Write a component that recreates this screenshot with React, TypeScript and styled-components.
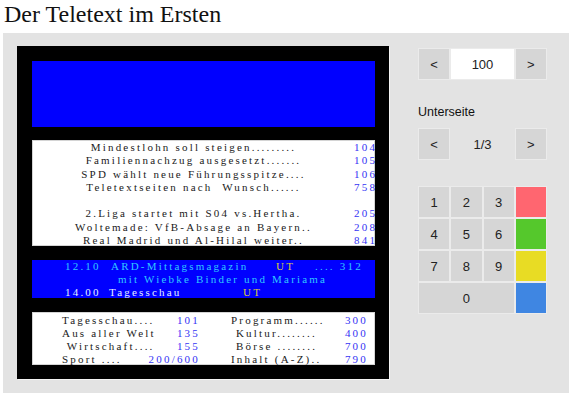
import React, { FC } from "react";
import styled, { createGlobalStyle } from "styled-components";

const GlobalStyle = createGlobalStyle`
  body {
    margin: 0;
    background: #fff;
  }
`;

const Title = styled.h1`
  margin: 0;
  padding: 1px 0 0 4px;
  height: 33px;
  box-sizing: border-box;
  font: normal 24px/26px "Liberation Serif", serif;
  color: #111;
`;

const Panel = styled.main`
  display: flex;
  align-items: flex-start;
  margin-left: 3px;
  padding: 13px 0 0 14px;
  height: 360px;
  box-sizing: border-box;
  background: #e3e3e3;
`;

const Screen = styled.section`
  display: flex;
  flex-direction: column;
  flex-shrink: 0;
  width: 372px;
  height: 333px;
  box-sizing: border-box;
  padding: 15px 14px 14px 15px;
  background: #000;
  box-shadow: 1px 1px 0 #f4f4f4;
  font-family: "Liberation Serif", serif;
  font-size: 11px;
  letter-spacing: 2.2px;
  white-space: pre;
`;

const Banner = styled.div`
  flex-shrink: 0;
  height: 66px;
  background: #0000ff;
`;

const Paper = styled.div<{ $h: number; $gap: number; $pad?: number }>`
  flex-shrink: 0;
  margin-top: ${p => p.$gap}px;
  height: ${p => p.$h}px;
  padding-top: ${p => p.$pad || 0}px;
  box-sizing: border-box;
  background: #fff;
  border: 1px solid #d4d4d4;
  color: #1a1a1a;
`;

const HeadlineRow = styled.div`
  display: grid;
  grid-template-columns: 321px 1fr;
  height: 13.25px;
  line-height: 13.25px;
`;

const HeadlineText = styled.span`
  text-align: center;
`;

const PageNum = styled.span`
  text-align: right;
  padding-right: 3px;
  color: #3434f4;
`;

const Schedule = styled.div`
  flex-shrink: 0;
  margin-top: 14px;
  height: 38px;
  padding-left: 33px;
  background: #0000ff;
  line-height: 13px;
`;

const ScheduleRow = styled.div<{ $indent?: number }>`
  display: flex;
  height: 13px;
  padding-left: ${p => p.$indent || 0}px;
`;

const Slot = styled.span<{ $w?: number; $c: string }>`
  ${p => (p.$w ? `width: ${p.$w}px;` : "")}
  flex-shrink: 0;
  color: ${p => p.$c};
`;

const IndexRow = styled.div`
  display: flex;
  gap: 28px;
  padding-left: 29px;
  height: 13px;
  line-height: 13px;
`;

const IndexHalf = styled.div<{ $w: number }>`
  display: flex;
  justify-content: space-between;
  width: ${p => p.$w}px;
`;

const Controls = styled.aside`
  display: flex;
  flex-direction: column;
  width: 129px;
  margin: 2px 0 0 29px;
  font-family: "Liberation Sans", Arial, sans-serif;
  font-size: 13px;
  color: #222;
`;

const KeyGrid = styled.div<{ $gap?: number }>`
  display: grid;
  grid-template-columns: repeat(4, 1fr);
  grid-auto-rows: 32px;
  margin-top: ${p => p.$gap || 0}px;
`;

const Key = styled.button<{ $color?: string; $span?: number }>`
  grid-column: span ${p => p.$span || 1};
  padding: 0;
  border: 1px solid #ebebeb;
  background: ${p => p.$color || "#d6d6d6"};
  font: inherit;
  color: #222;
`;

const PageInput = styled.input`
  grid-column: span 2;
  width: 100%;
  box-sizing: border-box;
  border: 1px solid #ebebeb;
  background: #fff;
  text-align: center;
  font: inherit;
  color: #222;
  outline: none;
`;

const SubPage = styled.span`
  grid-column: span 2;
  display: flex;
  align-items: center;
  justify-content: center;
`;

const Label = styled.div`
  margin-top: 25px;
  font-size: 12.5px;
  line-height: 14px;
  color: #111;
`;

const headlines: ([string, string] | null)[] = [
  ["Mindestlohn soll steigen.........", "104"],
  ["Familiennachzug ausgesetzt.......", "105"],
  ["SPD wählt neue Führungsspitze....", "106"],
  ["Teletextseiten nach  Wunsch......", "758"],
  null,
  ["2.Liga startet mit S04 vs.Hertha.", "205"],
  ["Woltemade: VfB-Absage an Bayern..", "208"],
  ["Real Madrid und Al-Hilal weiter..", "841"]
];

const index: [string, string, string, string][] = [
  ["Tagesschau....", "101", "Programm......", "300"],
  ["Aus aller Welt", "135", " Kultur........", "400"],
  [" Wirtschaft....", "155", " Börse ........", "700"],
  ["Sport ....", "200/600", "Inhalt (A-Z)..", "790"]
];

const CYAN = "#30c8ff";
const YELLOW = "#d8c83a";
const LIGHT = "#e6f2ff";

const App: FC = () => (
  <>
    <GlobalStyle />
    <Title>Der Teletext im Ersten</Title>
    <Panel>
      <Screen>
        <Banner />
        <Paper $h={106} $gap={13}>
          {headlines.map((item, i) => (
            <HeadlineRow key={i}>
              <HeadlineText>{item ? item[0] : ""}</HeadlineText>
              <PageNum>{item ? item[1] : ""}</PageNum>
            </HeadlineRow>
          ))}
        </Paper>
        <Schedule>
          <ScheduleRow>
            <Slot $w={46} $c={CYAN}>12.10</Slot>
            <Slot $w={165} $c={CYAN}>ARD-Mittagsmagazin</Slot>
            <Slot $w={39} $c={YELLOW}>UT</Slot>
            <Slot $c={CYAN}>.... 312</Slot>
          </ScheduleRow>
          <ScheduleRow $indent={53}>
            <Slot $c={CYAN}>mit Wiebke Binder und Mariama</Slot>
          </ScheduleRow>
          <ScheduleRow>
            <Slot $w={44} $c={LIGHT}>14.00</Slot>
            <Slot $w={134} $c={LIGHT}>Tagesschau</Slot>
            <Slot $c={YELLOW}>UT</Slot>
          </ScheduleRow>
        </Schedule>
        <Paper $h={53} $gap={14} $pad={1}>
          {index.map(([a, an, b, bn], i) => (
            <IndexRow key={i}>
              <IndexHalf $w={141}>
                <span>{a}</span>
                <PageNum>{an}</PageNum>
              </IndexHalf>
              <IndexHalf $w={140}>
                <span>{b}</span>
                <PageNum>{bn}</PageNum>
              </IndexHalf>
            </IndexRow>
          ))}
        </Paper>
      </Screen>

      <Controls>
        <KeyGrid>
          <Key>&lt;</Key>
          <PageInput defaultValue="100" />
          <Key>&gt;</Key>
        </KeyGrid>
        <Label>Unterseite</Label>
        <KeyGrid $gap={9}>
          <Key>&lt;</Key>
          <SubPage>1/3</SubPage>
          <Key>&gt;</Key>
        </KeyGrid>
        <KeyGrid $gap={26}>
          <Key>1</Key>
          <Key>2</Key>
          <Key>3</Key>
          <Key $color="#ff6670" />
          <Key>4</Key>
          <Key>5</Key>
          <Key>6</Key>
          <Key $color="#55c82c" />
          <Key>7</Key>
          <Key>8</Key>
          <Key>9</Key>
          <Key $color="#e8dc24" />
          <Key $span={3}>0</Key>
          <Key $color="#3f86e2" />
        </KeyGrid>
      </Controls>
    </Panel>
  </>
);

export default App;
